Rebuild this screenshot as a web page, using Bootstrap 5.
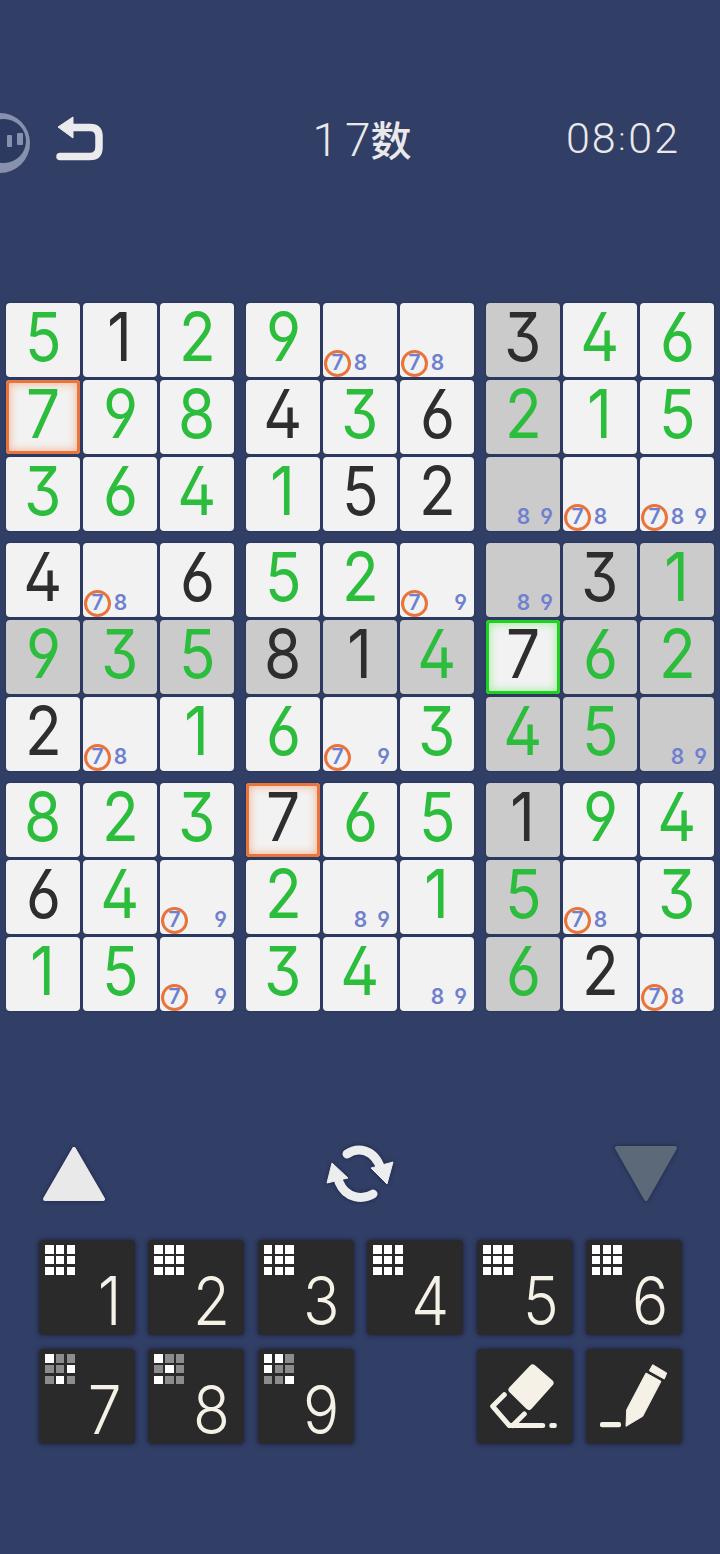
<!doctype html>
<html lang="zh"><head><meta charset="utf-8">
<link rel="stylesheet" href="https://cdn.jsdelivr.net/npm/bootstrap@5.3.0/dist/css/bootstrap.min.css">
<style>
html,body{margin:0;background:#313e66;}
.app{width:720px;height:1554px;overflow:hidden;position:relative;background:#313e66;font-family:Inter,"Liberation Sans",sans-serif;font-feature-settings:"cv03","cv04","ss01";}
.ball{position:absolute;left:0;top:113px;}
.hdr{margin-top:113px;height:60px;padding:0 40px 0 44px;display:grid;grid-template-columns:1fr auto 1fr;align-items:start;color:#e9e9ea;}
.hdr svg{margin:3px 0 0 12px;display:block;}
.ttl{font-family:Roboto,sans-serif;font-weight:300;font-size:46px;line-height:50px;}
.ttl .d1{letter-spacing:7px;}
.ttl .zh{font-family:"Noto Sans CJK SC",sans-serif;font-size:41px;font-weight:500;}
.tmr{font-family:Roboto,sans-serif;font-weight:300;font-size:43px;letter-spacing:2px;text-align:right;line-height:50px;}
.tmr span{font-size:32px;margin:0 1px;position:relative;top:-3px;}
.brd{margin:130px 6px 0;grid-template-columns:repeat(3,228px);gap:12px;}
.bx{grid-template-columns:repeat(3,74px);gap:3px;}
.cel{width:74px;height:74px;background:#f2f2f2;border-radius:4px;box-shadow:0 0 2px rgba(18,26,56,.6);font-size:67px;line-height:68px;display:flex;justify-content:center;position:relative;}
.cel>b{font-weight:375;display:block;transform:scaleX(.9);}
.g{color:#2cbd3c;}
.k{color:#2e2e2e;}
.gy{background:#cbcbcb;}
.so{box-shadow:inset 0 0 0 3px #e8753d,inset 0 0 8px 4px #f4b998,0 0 2px rgba(18,26,56,.6);}
.sg{box-shadow:inset 0 0 0 3px #21d122,inset 0 0 8px 4px #a6eea6,0 0 2px rgba(18,26,56,.6);}
.nts{position:absolute;left:3px;top:47px;display:flex;color:#6f80cf;font-size:21px;font-weight:600;line-height:26px;}
.nts span{width:23px;height:26px;text-align:center;position:relative;}
.nts .rg::after{content:"";position:absolute;left:-2px;top:0;width:27px;height:27px;border:3px solid #e8743b;border-radius:50%;}
.ctl{margin-top:133px;padding:0 42px;height:60px;}
.ctl svg{display:block;filter:drop-shadow(0 0 2px rgba(18,26,56,.7));}
.kpd{margin:36px 0 0 39px;width:643px;grid-template-columns:repeat(6,96px);column-gap:13.400px;row-gap:14px;}
.key{width:96px;height:95px;padding:0;border:0;border-radius:4px;background:#2a2a2a;box-shadow:0 0 5px rgba(18,26,56,.9);color:#f5f1e7;font-size:67px;line-height:1;position:relative;display:block;}
.key:hover{background:#2a2a2a;color:#f5f1e7;}
.key>b{position:absolute;right:14px;bottom:-3px;font-weight:320;line-height:74px;display:block;transform:scaleX(.9);transform-origin:right;}
.key svg.ic{position:absolute;left:0;top:0;}
.mg{position:absolute;left:6px;top:5px;display:grid;grid-template-columns:repeat(3,8.500px);gap:2.250px;}
.mg i{width:8.500px;height:8.500px;background:#fff;display:block;}
.mg i.o{background:#8c8c8c;}
.sp{grid-column:4;}
</style></head><body>
<div class="app">
<svg class="ball" width="30" height="60" viewBox="0 0 30 60"><circle cx="0" cy="30" r="30" fill="#8791ad"/><circle cx="4" cy="28" r="22" fill="#2c3a62"/><rect x="7" y="22" width="5" height="12" rx="1" fill="#8791ad"/><rect x="17" y="20" width="6" height="12" rx="1" fill="#8791ad"/></svg>
<div class="hdr">
<div><svg width="48" height="46" viewBox="0 0 48 46"><path d="M15 11.500H34Q43 11.500 43 20.500V31Q43 40.500 34 40.500H4" fill="none" stroke="#ebebed" stroke-width="7.500" stroke-linecap="round"/><path d="M2 11 17 1V22Z" fill="#ebebed" stroke="#ebebed" stroke-linejoin="round"/></svg></div>
<div class="ttl"><span class="d1">1</span>7<span class="zh">数</span></div>
<div class="tmr">08<span>:</span>02</div>
</div>
<div class="brd d-grid">
<div class="bx d-grid">
<div class="cel g"><b>5</b></div><div class="cel k"><b>1</b></div><div class="cel g"><b>2</b></div>
<div class="cel g so"><b>7</b></div><div class="cel g"><b>9</b></div><div class="cel g"><b>8</b></div>
<div class="cel g"><b>3</b></div><div class="cel g"><b>6</b></div><div class="cel g"><b>4</b></div>
</div>
<div class="bx d-grid">
<div class="cel g"><b>9</b></div><div class="cel"><div class="nts"><span class="rg">7</span><span>8</span></div></div><div class="cel"><div class="nts"><span class="rg">7</span><span>8</span></div></div>
<div class="cel k"><b>4</b></div><div class="cel g"><b>3</b></div><div class="cel k"><b>6</b></div>
<div class="cel g"><b>1</b></div><div class="cel k"><b>5</b></div><div class="cel k"><b>2</b></div>
</div>
<div class="bx d-grid">
<div class="cel k gy"><b>3</b></div><div class="cel g"><b>4</b></div><div class="cel g"><b>6</b></div>
<div class="cel g gy"><b>2</b></div><div class="cel g"><b>1</b></div><div class="cel g"><b>5</b></div>
<div class="cel gy"><div class="nts"><span></span><span>8</span><span>9</span></div></div><div class="cel"><div class="nts"><span class="rg">7</span><span>8</span></div></div><div class="cel"><div class="nts"><span class="rg">7</span><span>8</span><span>9</span></div></div>
</div>
<div class="bx d-grid">
<div class="cel k"><b>4</b></div><div class="cel"><div class="nts"><span class="rg">7</span><span>8</span></div></div><div class="cel k"><b>6</b></div>
<div class="cel g gy"><b>9</b></div><div class="cel g gy"><b>3</b></div><div class="cel g gy"><b>5</b></div>
<div class="cel k"><b>2</b></div><div class="cel"><div class="nts"><span class="rg">7</span><span>8</span></div></div><div class="cel g"><b>1</b></div>
</div>
<div class="bx d-grid">
<div class="cel g"><b>5</b></div><div class="cel g"><b>2</b></div><div class="cel"><div class="nts"><span class="rg">7</span><span></span><span>9</span></div></div>
<div class="cel k gy"><b>8</b></div><div class="cel k gy"><b>1</b></div><div class="cel g gy"><b>4</b></div>
<div class="cel g"><b>6</b></div><div class="cel"><div class="nts"><span class="rg">7</span><span></span><span>9</span></div></div><div class="cel g"><b>3</b></div>
</div>
<div class="bx d-grid">
<div class="cel gy"><div class="nts"><span></span><span>8</span><span>9</span></div></div><div class="cel k gy"><b>3</b></div><div class="cel g gy"><b>1</b></div>
<div class="cel k sg"><b>7</b></div><div class="cel g gy"><b>6</b></div><div class="cel g gy"><b>2</b></div>
<div class="cel g gy"><b>4</b></div><div class="cel g gy"><b>5</b></div><div class="cel gy"><div class="nts"><span></span><span>8</span><span>9</span></div></div>
</div>
<div class="bx d-grid">
<div class="cel g"><b>8</b></div><div class="cel g"><b>2</b></div><div class="cel g"><b>3</b></div>
<div class="cel k"><b>6</b></div><div class="cel g"><b>4</b></div><div class="cel"><div class="nts"><span class="rg">7</span><span></span><span>9</span></div></div>
<div class="cel g"><b>1</b></div><div class="cel g"><b>5</b></div><div class="cel"><div class="nts"><span class="rg">7</span><span></span><span>9</span></div></div>
</div>
<div class="bx d-grid">
<div class="cel k so"><b>7</b></div><div class="cel g"><b>6</b></div><div class="cel g"><b>5</b></div>
<div class="cel g"><b>2</b></div><div class="cel"><div class="nts"><span></span><span>8</span><span>9</span></div></div><div class="cel g"><b>1</b></div>
<div class="cel g"><b>3</b></div><div class="cel g"><b>4</b></div><div class="cel"><div class="nts"><span></span><span>8</span><span>9</span></div></div>
</div>
<div class="bx d-grid">
<div class="cel k gy"><b>1</b></div><div class="cel g"><b>9</b></div><div class="cel g"><b>4</b></div>
<div class="cel g gy"><b>5</b></div><div class="cel"><div class="nts"><span class="rg">7</span><span>8</span></div></div><div class="cel g"><b>3</b></div>
<div class="cel g gy"><b>6</b></div><div class="cel k"><b>2</b></div><div class="cel"><div class="nts"><span class="rg">7</span><span>8</span></div></div>
</div>
</div>
<div class="ctl d-flex justify-content-between align-items-start">
<svg width="64" height="60" viewBox="0 0 64 60"><path d="M32 5 61 55H3Z" fill="#e9e9ea" stroke="#e9e9ea" stroke-width="4" stroke-linejoin="round"/></svg>
<svg width="70" height="60" viewBox="0 0 70 60"><path d="M22 10C32 3 49 4 56 25M48 50C38 56 21 55 14 38" fill="none" stroke="#ecedee" stroke-width="9" stroke-linecap="round"/><path d="M46 24 68 18 62 40ZM7 19 23 34 2 39Z" fill="#ecedee" stroke="#ecedee" stroke-linejoin="round"/></svg>
<svg width="64" height="60" viewBox="0 0 64 60"><path d="M3 4H61L32 55Z" fill="#5b6979" stroke="#5b6979" stroke-width="4" stroke-linejoin="round"/></svg>
</div>
<div class="kpd d-grid">
<button class="btn key"><span class="mg"><i></i><i></i><i></i><i></i><i></i><i></i><i></i><i></i><i></i></span><b>1</b></button>
<button class="btn key"><span class="mg"><i></i><i></i><i></i><i></i><i></i><i></i><i></i><i></i><i></i></span><b>2</b></button>
<button class="btn key"><span class="mg"><i></i><i></i><i></i><i></i><i></i><i></i><i></i><i></i><i></i></span><b>3</b></button>
<button class="btn key"><span class="mg"><i></i><i></i><i></i><i></i><i></i><i></i><i></i><i></i><i></i></span><b>4</b></button>
<button class="btn key"><span class="mg"><i></i><i></i><i></i><i></i><i></i><i></i><i></i><i></i><i></i></span><b>5</b></button>
<button class="btn key"><span class="mg"><i></i><i></i><i></i><i></i><i></i><i></i><i></i><i></i><i></i></span><b>6</b></button>
<button class="btn key"><span class="mg"><i></i><i class="o"></i><i class="o"></i><i class="o"></i><i class="o"></i><i></i><i class="o"></i><i></i><i class="o"></i></span><b>7</b></button>
<button class="btn key"><span class="mg"><i></i><i class="o"></i><i class="o"></i><i class="o"></i><i></i><i class="o"></i><i></i><i class="o"></i><i class="o"></i></span><b>8</b></button>
<button class="btn key"><span class="mg"><i></i><i></i><i class="o"></i><i></i><i class="o"></i><i class="o"></i><i class="o"></i><i class="o"></i><i></i></span><b>9</b></button>
<div class="sp"></div>
<button class="btn key" aria-label="erase"><svg class="ic" width="96" height="95" viewBox="0 0 96 95"><path d="M55.700 19 73 34 52 57.500 35 40.700Z" fill="#f5f1e7" stroke="#f5f1e7" stroke-width="7" stroke-linejoin="round"/><path d="M27.300 45.700 15.700 57.300 32.300 76.500H65.700M47.300 65 35.700 76.500" fill="none" stroke="#f5f1e7" stroke-width="5" stroke-linecap="round" stroke-linejoin="round"/><rect x="72.300" y="74" width="7.500" height="5" rx="2" fill="#f5f1e7"/></svg></button>
<button class="btn key" aria-label="pencil"><svg class="ic" width="96" height="95" viewBox="0 0 96 95"><path d="M60 24 75 32.300 56.700 67.300 40 77.300 40.700 60.700Z" fill="#f5f1e7" stroke="#f5f1e7" stroke-linejoin="round"/><path d="M66.700 15.700 80.700 24 78.300 30 63.300 21.700Z" fill="#f5f1e7" stroke="#f5f1e7" stroke-linejoin="round"/><rect x="14" y="73" width="21" height="5.300" rx="2" fill="#f5f1e7"/></svg></button>
</div>
</div>
<script src="https://cdn.jsdelivr.net/npm/bootstrap@5.3.0/dist/js/bootstrap.bundle.min.js"></script>
</body></html>
